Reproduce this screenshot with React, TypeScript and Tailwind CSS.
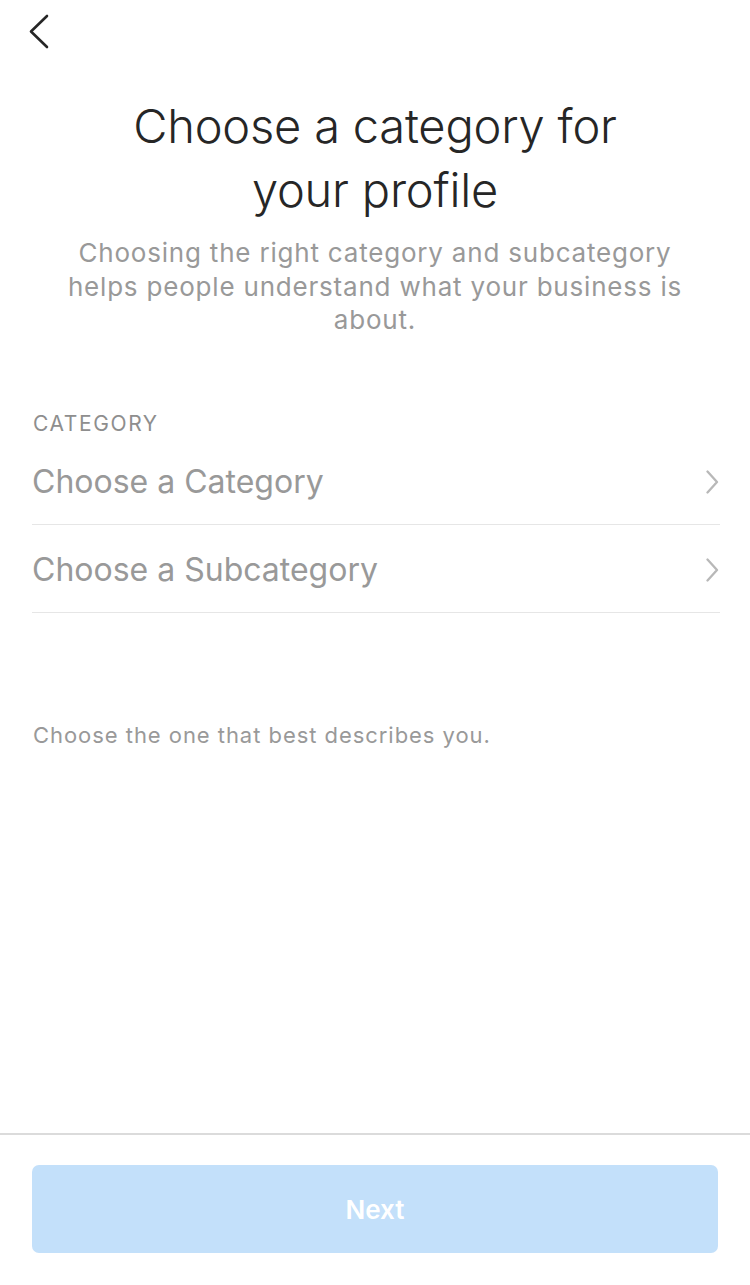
import React from "react";

function Chevron({ className }: { className?: string }) {
  return (
    <svg className={className} viewBox="0 0 14 24" fill="none" stroke="currentColor" strokeWidth={2.3} strokeLinecap="round" strokeLinejoin="round">
      <path d="M2.5 1.5 L12 12 L2.5 22.5" />
    </svg>
  );
}

export default function App() {
  return (
    <div className="w-[750px] h-[1285px] bg-white flex flex-col text-[#262626]" style={{ fontFamily: "Inter, 'Noto Sans', sans-serif" }}>
      <div className="h-[64px] flex items-start pl-[28px] pt-[14px]">
        <svg className="w-[22px] h-[36px] text-[#262626]" viewBox="0 0 22 36" fill="none" stroke="currentColor" strokeWidth={2.6} strokeLinecap="round" strokeLinejoin="round">
          <path d="M19 2 L3 17.5 L19 33" />
        </svg>
      </div>
      <div className="flex flex-col flex-1">
        <h1 className="mt-[30px] text-center text-[47px] leading-[64px] font-light tracking-[-0.2px]">
          Choose a category for<br />your profile
        </h1>
        <p className="mt-[14px] px-[62px] text-center text-[26px] leading-[33.5px] text-[#999999] tracking-[0.8px]">
          Choosing the right category and subcategory helps people understand what your business is about.
        </p>
        <div className="mt-[75px] pl-[32px] pr-[30px]">
          <div className="text-[21px] leading-[24px] text-[#8e8e8e] pl-[1px] tracking-[1.6px]">CATEGORY</div>
          <div className="mt-[1px] flex items-center justify-between h-[88px] pt-[4px] border-b border-[#e6e6e6]">
            <span className="text-[32px] text-[#999999]">Choose a Category</span>
            <Chevron className="w-[14px] h-[24px] text-[#b8b8b8] mr-[1px]" />
          </div>
          <div className="flex items-center justify-between h-[88px] pt-[4px] border-b border-[#e6e6e6]">
            <span className="text-[32px] text-[#999999]">Choose a Subcategory</span>
            <Chevron className="w-[14px] h-[24px] text-[#b8b8b8] mr-[1px]" />
          </div>
          <div className="mt-[107px] text-[22px] leading-[30px] text-[#999999] pl-[1px] tracking-[0.95px]">Choose the one that best describes you.</div>
        </div>
        <div className="flex-1" />
        <div className="border-t-2 border-[#dbdbdb] px-[32px] pt-[30px] pb-[32px]">
          <button className="w-full h-[88px] rounded-[7px] bg-[#c3e0fa] text-white text-[26px] font-semibold">Next</button>
        </div>
      </div>
    </div>
  );
}
